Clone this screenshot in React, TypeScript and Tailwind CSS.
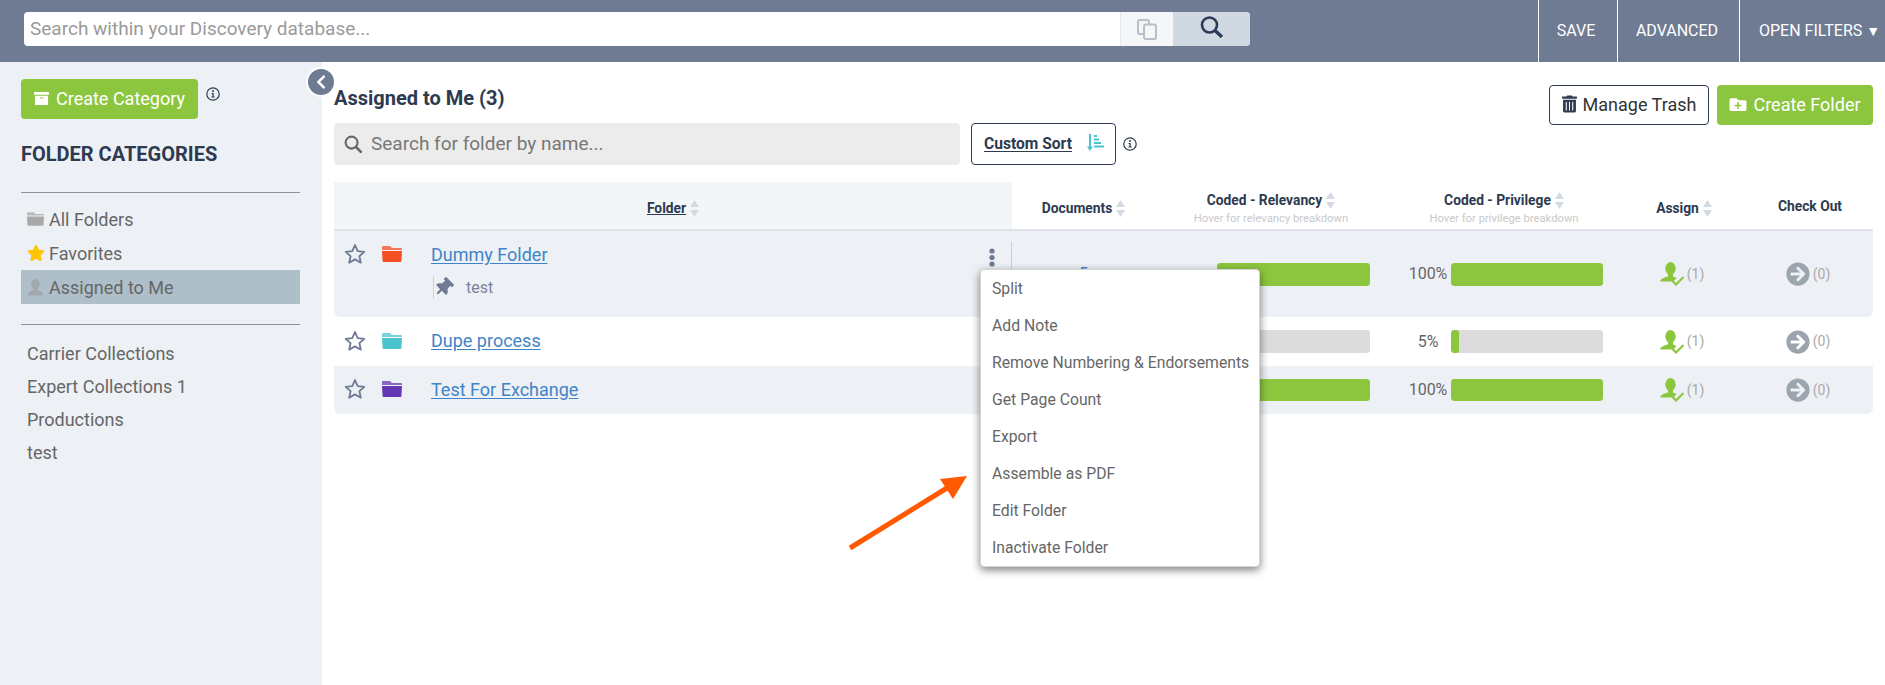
import { FaArchive, FaArrowCircleRight, FaChevronLeft, FaFolderPlus, FaStar, FaThumbtack, FaTrashAlt } from "react-icons/fa";

const folderCategories = ["Carrier Collections", "Expert Collections 1", "Productions", "test"];

const menuItems = [
  "Split",
  "Add Note",
  "Remove Numbering & Endorsements",
  "Get Page Count",
  "Export",
  "Assemble as PDF",
  "Edit Folder",
  "Inactivate Folder",
];

const InfoIcon = ({ className = "" }: { className?: string }) => (
  <svg viewBox="0 0 14 14" className={`w-[14px] h-[14px] text-[#2d3a50] ${className}`}>
    <circle cx="7" cy="7" r="6.2" fill="none" stroke="currentColor" strokeWidth="1.2" />
    <circle cx="7" cy="4" r="1" fill="currentColor" />
    <path d="M5.5 6h2.2v3.6h1v1H5.4v-1h1V7h-.9z" fill="currentColor" />
  </svg>
);

const SortArrows = () => (
  <svg viewBox="0 0 9 17" className="w-[9px] h-[17px] ml-[4px] shrink-0">
    <path d="M4.5 0L9 7H0z" fill="#d3dae1" />
    <path d="M0 10h9l-4.5 7z" fill="#d3dae1" />
  </svg>
);

const FolderIcon = ({ color, className = "" }: { color: string; className?: string }) => (
  <svg viewBox="0 0 20 16" className={className}>
    <path d="M1 0h7l2 2h9a1 1 0 0 1 1 1v1H0V1a1 1 0 0 1 1-1z" fill={color} opacity="0.75" />
    <path d="M0 5h20l-.6 10a1 1 0 0 1-1 1H1.6a1 1 0 0 1-1-1z" fill={color} />
  </svg>
);

const PersonIcon = ({ color, className = "" }: { color: string; className?: string }) => (
  <svg viewBox="0 0 18 18" className={className}>
    <ellipse cx="9" cy="5.5" rx="4.6" ry="5.5" fill={color} />
    <path d="M6.500 9.500h5v2.200c2.500.8 5.500 2 6 4.800a1 1 0 0 1-1 1H1.500a1 1 0 0 1-1-1c.5-2.800 3.500-4 6-4.800z" fill={color} />
  </svg>
);

const AssignIcon = () => (
  <svg viewBox="0 0 24 24" className="w-[24px] h-[24px]">
    <ellipse cx="10.500" cy="6.500" rx="5.200" ry="6.500" fill="#8cc63f" />
    <path d="M8 12h5v2.500c1 .4 2.500.8 3.500 1.500l-3 3.500H1c-.5 0-1-.5-.7-1 1.200-2 4.700-3.500 7.700-4z" fill="#8cc63f" />
    <path d="M12.500 19l3.500 3.500 7.500-7.500" fill="none" stroke="#8cc63f" strokeWidth="2.200" />
  </svg>
);

const OutlineStar = () => (
  <svg viewBox="0 0 22 22" className="w-[22px] h-[22px] shrink-0">
    <path
      d="M11 2l2.700 6.100 6.600.7-4.900 4.400 1.400 6.500L11 16.400l-5.800 3.300 1.400-6.500-4.900-4.400 6.600-.7z"
      fill="none"
      stroke="#6e7b93"
      strokeWidth="1.800"
      strokeLinejoin="round"
    />
  </svg>
);

const Bar = ({ pct, className, hideLabel, height }: { pct: number; className: string; hideLabel?: boolean; height: string }) => (
  <div className="flex items-center">
    <span className={`text-center text-[16px] text-[#666] ${hideLabel ? "w-[62px]" : "w-[46px] ml-[18px]"}`}>
      {hideLabel ? "" : `${pct}%`}
    </span>
    <div className={`rounded-[3px] bg-[#dcdcdc] overflow-hidden ${className} ${height}`}>
      <div className="h-full rounded-[3px] bg-[#8cc63f]" style={{ width: `${pct}%` }} />
    </div>
  </div>
);

const TableRow = ({
  name,
  color,
  docs,
  relevancy,
  privilege,
  striped,
  expanded,
  rowH,
  barH,
}: {
  name: string;
  color: string;
  docs?: number;
  relevancy: number;
  privilege: number;
  striped?: boolean;
  expanded?: boolean;
  rowH: string;
  barH: string;
}) => (
  <div
    className={`grid grid-cols-[678px_143px_232px_234px_126px_126px] items-center rounded-b-[6px] ${
      striped ? "bg-[#edf1f6]" : "bg-white"
    } ${rowH}`}
  >
    <div className={expanded ? "self-start pt-[9px]" : "mb-[2px]"}>
      <div className="flex items-center h-[28px] pl-[10px]">
        <OutlineStar />
        <FolderIcon color={color} className="w-[20px] h-[16px] ml-[16px] shrink-0" />
        <a className="ml-[29px] text-[18px] text-[#3f84c8] underline underline-offset-2">{name}</a>
        {expanded && (
          <div className="ml-auto flex items-center justify-center w-[40px] h-[30px] mt-[6px] border-r border-[#c9d0d8]">
            <svg viewBox="0 0 6 19" className="w-[6px] h-[19px]">
              <circle cx="3" cy="3" r="2.600" fill="#6e7b93" />
              <circle cx="3" cy="9.500" r="2.600" fill="#6e7b93" />
              <circle cx="3" cy="16" r="2.600" fill="#6e7b93" />
            </svg>
          </div>
        )}
      </div>
      {expanded && (
        <div className="flex items-center h-[23px] mt-[8px] ml-[99px] border-l border-[#c9d0d8]">
          <FaThumbtack className="w-[19px] h-[19px] rotate-45 text-[#6e7b93]" />
          <span className="ml-[13px] text-[16px] text-[#7b8494]">test</span>
        </div>
      )}
    </div>
    <div className="text-center text-[16px] text-[#3f84c8]">{docs}</div>
    <Bar pct={relevancy} className="w-[153px]" hideLabel height={barH} />
    <Bar pct={privilege} className="w-[152px]" height={barH} />
    <div className="flex items-center justify-center pr-[4px]">
      <AssignIcon />
      <span className="ml-[3px] text-[14px] text-[#aaa]">(1)</span>
    </div>
    <div className="flex items-center justify-center pr-[4px]">
      <FaArrowCircleRight className="w-[24px] h-[24px] text-[#9ca5ae]" />
      <span className="ml-[3px] text-[14px] text-[#aaa]">(0)</span>
    </div>
  </div>
);

export default function App() {
  return (
    <div className="flex flex-col h-screen overflow-hidden bg-white font-['Roboto',sans-serif]">
      {/* top bar */}
      <div className="flex items-center h-[62px] shrink-0 bg-[#6e7b93]">
        <div className="flex w-[1226px] h-[34px] mb-[4px] ml-[24px] rounded-[4px] overflow-hidden bg-white">
          <input
            className="flex-1 px-[6px] text-[19px] text-[#666] outline-none placeholder:text-[#9a9a9a]"
            placeholder="Search within your Discovery database..."
          />
          <div className="flex items-center justify-center w-[53px] bg-[#f5f6f8] border-l border-[#e6e8ec]">
            <svg viewBox="0 0 21 21" className="w-[21px] h-[21px]">
              <rect x="1" y="1" width="11" height="14" rx="2" fill="none" stroke="#b7bfcb" strokeWidth="2" />
              <rect x="7" y="5.500" width="12" height="14.500" rx="2" fill="#f5f6f8" stroke="#b7bfcb" strokeWidth="2" />
            </svg>
          </div>
          <div className="flex justify-center w-[77px] pt-[4px] bg-[#d0d8e1]">
            <svg viewBox="0 0 24 22" className="w-[24px] h-[22px]">
              <circle cx="9.500" cy="9" r="7.500" fill="none" stroke="#2a3b57" strokeWidth="2.600" />
              <path d="M15 14.500l7 6.500" stroke="#2a3b57" strokeWidth="3.400" />
            </svg>
          </div>
        </div>
        <div className="flex h-full ml-auto text-[16px] text-white">
          <div className="flex items-center justify-center w-[79px] pr-[4px] border-l border-white">SAVE</div>
          <div className="flex items-center justify-center w-[122px] pr-[3px] border-l border-white">ADVANCED</div>
          <div className="flex items-center w-[146px] pl-[19px] border-l border-white whitespace-nowrap">
            OPEN FILTERS <span className="ml-[4px] text-[14px]">▼</span>
          </div>
        </div>
      </div>

      <div className="flex flex-1">
        {/* sidebar */}
        <div className="w-[322px] shrink-0 pt-[17px] pl-[21px] pr-[22px] bg-[#edf1f6]">
          <div className="flex items-start">
            <button className="flex items-center w-[177px] h-[40px] pl-[13px] pb-[2px] rounded-[4px] bg-[#8cc63f] text-[18px] text-white">
              <FaArchive className="w-[15px] h-[15px] mr-[7px]" />
              Create Category
            </button>
            <InfoIcon className="ml-[8px] mt-[8px]" />
          </div>
          <div className="mt-[21px] text-[20px] leading-[28px] font-bold text-[#2d3a50]">FOLDER CATEGORIES</div>
          <div className="mt-[24px] border-t border-[#8f9296]" />
          <div className="mt-[9px] text-[18px] text-[#666]">
            <div className="flex items-center h-[34px] pl-[6px]">
              <FolderIcon color="#a8a8a8" className="w-[17px] h-[16px] mr-[5px]" />
              All Folders
            </div>
            <div className="flex items-center h-[34px] pl-[6px]">
              <FaStar className="w-[18px] h-[18px] mr-[4px] text-[#ffc400]" />
              Favorites
            </div>
            <div className="flex items-center h-[34px] pl-[6px] bg-[#aebfc9]">
              <PersonIcon color="#a0a9ae" className="w-[17px] h-[17px] mr-[5px]" />
              Assigned to Me
            </div>
          </div>
          <div className="mt-[20px] border-t border-[#8f9296]" />
          <div className="mt-[12px] text-[18px] text-[#666]">
            {folderCategories.map((c) => (
              <div key={c} className="flex items-center h-[33px] pl-[6px]">
                {c}
              </div>
            ))}
          </div>
        </div>

        {/* main */}
        <div className="relative flex-1 px-[12px]">
          <button className="absolute left-[-16px] top-[5px] flex items-center justify-center w-[30px] h-[30px] rounded-full border-2 border-white bg-[#6e7b93]">
            <FaChevronLeft className="w-[16px] h-[16px] text-white" />
          </button>

          <div className="flex justify-between">
            <div className="pt-[17px]">
              <div className="text-[20px] leading-[38px] font-bold text-[#2d3a50]">Assigned to Me (3)</div>
              <div className="flex items-center mt-[6px]">
                <div className="flex items-center w-[626px] h-[42px] pl-[10px] rounded-[4px] bg-[#ececec] text-[19px] text-[#777]">
                  <svg viewBox="0 0 20 20" className="w-[19px] h-[19px] mr-[8px]">
                    <circle cx="8" cy="8" r="6.300" fill="none" stroke="#666" strokeWidth="2.200" />
                    <path d="M12.500 12.500l6 6" stroke="#666" strokeWidth="2.800" />
                  </svg>
                  Search for folder by name...
                </div>
                <div className="flex items-center w-[145px] h-[42px] ml-[11px] pl-[12px] rounded-[4px] border border-[#2d3a50]">
                  <span className="mt-[2px] text-[15.600px] font-bold text-[#2d3a50] underline underline-offset-2">Custom Sort</span>
                  <svg viewBox="0 0 17 17" className="w-[17px] h-[17px] ml-[15px] mb-[4px]">
                    <path d="M3 0v14" stroke="#4ac5cd" strokeWidth="2" />
                    <path d="M0 12.500h6L3 17z" fill="#4ac5cd" />
                    <path d="M7 1h3v2H7zM7 4.500h5v2H7zM7 8h7v2H7zM7 11.500h10v2H7z" fill="#4ac5cd" />
                  </svg>
                </div>
                <InfoIcon className="ml-[7px]" />
              </div>
            </div>
            <div className="flex gap-[8px] pt-[23px]">
              <button className="flex items-center justify-center w-[160px] h-[40px] pb-[2px] rounded-[4px] border border-[#2d3a50] text-[18px] text-[#333]">
                <FaTrashAlt className="w-[15px] h-[18px] mr-[6px] text-[#2d3a50]" />
                Manage Trash
              </button>
              <button className="flex items-center justify-center w-[156px] h-[40px] pb-[2px] rounded-[4px] bg-[#8cc63f] text-[18px] text-white">
                <FaFolderPlus className="w-[18px] h-[17px] mr-[6px]" />
                Create Folder
              </button>
            </div>
          </div>

          {/* folder table */}
          <div className="relative mt-[17px]">
            <div className="grid grid-cols-[678px_143px_232px_234px_126px_126px] items-center h-[49px] border-b-2 border-[#dfe2e6] text-[13.800px] font-bold text-[#2d3a50]">
              <div className="flex items-center justify-center h-full pt-[5px] bg-[#f2f6f9]">
                <span className="underline">Folder</span>
                <SortArrows />
              </div>
              <div className="flex items-center justify-center mt-[5px]">
                Documents
                <SortArrows />
              </div>
              <div className="flex flex-col items-center mt-[4px]">
                <div className="flex items-center">
                  Coded - Relevancy
                  <SortArrows />
                </div>
                <div className="mt-[1px] text-[11.250px] leading-[13px] font-normal text-[#c9c9c9]">Hover for relevancy breakdown</div>
              </div>
              <div className="flex flex-col items-center mt-[4px]">
                <div className="flex items-center">
                  Coded - Privilege
                  <SortArrows />
                </div>
                <div className="mt-[1px] text-[11.250px] leading-[13px] font-normal text-[#c9c9c9]">Hover for privilege breakdown</div>
              </div>
              <div className="flex items-center justify-center mt-[5px]">
                Assign
                <SortArrows />
              </div>
              <div className="mt-[2px] text-center">Check Out</div>
            </div>

            <TableRow name="Dummy Folder" color="#f44e23" docs={5} relevancy={100} privilege={100} striped expanded rowH="h-[86px]" barH="h-[23px]" />
            <TableRow name="Dupe process" color="#4ac5cd" relevancy={5} privilege={5} rowH="h-[49px]" barH="h-[23px]" />
            <TableRow name="Test For Exchange" color="#6437b5" relevancy={100} privilege={100} striped rowH="h-[48px]" barH="h-[22px]" />

            {/* row actions menu */}
            <div className="absolute left-[646px] top-[87px] w-[280px] rounded-[4px] border border-[#d5d5d5] bg-white shadow-[0_3px_8px_rgba(0,0,0,0.5)]">
              {menuItems.map((item) => (
                <div key={item} className="flex items-center h-[37px] pl-[11px] text-[15.750px] text-[#666]">
                  <span>{item}</span>
                </div>
              ))}
            </div>

            {/* annotation arrow */}
            <svg viewBox="0 0 130 85" className="absolute left-[511px] top-[288px] w-[130px] h-[85px]">
              <path d="M5 78L102 18" stroke="#ff5a00" strokeWidth="5" />
              <path d="M122 6L95 9l13 20z" fill="#ff5a00" />
            </svg>
          </div>
        </div>
      </div>
    </div>
  );
}
